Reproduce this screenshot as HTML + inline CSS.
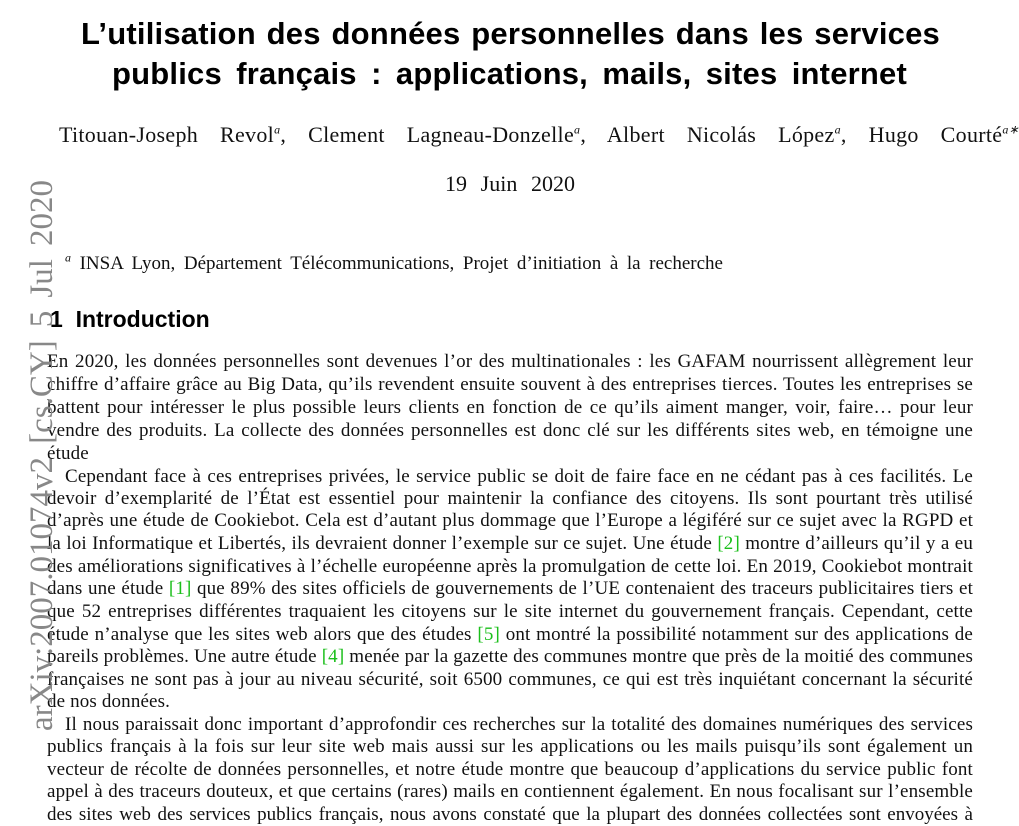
<!DOCTYPE html>
<html><head><meta charset="utf-8"><style>
body{margin:0;width:1019px;height:811px;overflow:hidden;background:#fff;position:relative;font-family:"Liberation Serif",serif;color:#111}
.l{position:absolute;white-space:nowrap;text-align:justify;text-align-last:justify;overflow:visible}
.t{font-family:"Liberation Sans",sans-serif;font-weight:bold;font-size:31px;letter-spacing:0.2px;line-height:36px;color:#000}
.b{font-size:19px;letter-spacing:0.15px;line-height:22px;left:47px;width:926px}
.n{text-align-last:left}
.g{color:#1bbf1b}
sup{font-size:12px;font-style:italic;line-height:0}
#side{position:absolute;left:20px;top:731px;transform-origin:0 0;transform:rotate(-90deg);font-size:33px;color:#888;white-space:nowrap;width:551px;text-align:justify;text-align-last:justify;line-height:44px}
</style></head><body>
<div class="l t" style="left:81px;top:16px;width:859px">L’utilisation des données personnelles dans les services</div>
<div class="l t" style="left:112px;top:56px;width:795px">publics français : applications, mails, sites internet</div>
<div class="l" style="left:59px;top:122px;width:960px;font-size:22px;letter-spacing:0.3px;line-height:26px">Titouan-Joseph Revol<sup>a</sup>, Clement Lagneau-Donzelle<sup>a</sup>, Albert Nicolás López<sup>a</sup>, Hugo Courté<sup>a∗</sup></div>
<div class="l" style="left:445px;top:171px;width:130px;font-size:22px;line-height:26px">19 Juin 2020</div>
<div class="l" style="left:65px;top:253px;width:658px;font-size:19px;line-height:22px"><sup>a</sup> INSA Lyon, Département Télécommunications, Projet d’initiation à la recherche</div>
<div class="l" style="left:50px;top:305px;width:158px;font-family:'Liberation Sans',sans-serif;font-weight:bold;font-size:23px;line-height:28px;color:#000">1&nbsp; Introduction</div>

<div class="l b" style="top:351px">En 2020, les données personnelles sont devenues l’or des multinationales : les GAFAM nourrissent allègrement leur</div>
<div class="l b" style="top:374px">chiffre d’affaire grâce au Big Data, qu’ils revendent ensuite souvent à des entreprises tierces. Toutes les entreprises se</div>
<div class="l b" style="top:397px">battent pour intéresser le plus possible leurs clients en fonction de ce qu’ils aiment manger, voir, faire… pour leur</div>
<div class="l b" style="top:420px">vendre des produits. La collecte des données personnelles est donc clé sur les différents sites web, en témoigne une</div>
<div class="l b n" style="top:443px">étude</div>
<div class="l b" style="top:466px;left:65px;width:908px">Cependant face à ces entreprises privées, le service public se doit de faire face en ne cédant pas à ces facilités. Le</div>
<div class="l b" style="top:488px">devoir d’exemplarité de l’État est essentiel pour maintenir la confiance des citoyens. Ils sont pourtant très utilisé</div>
<div class="l b" style="top:510px">d’après une étude de Cookiebot. Cela est d’autant plus dommage que l’Europe a légiféré sur ce sujet avec la RGPD et</div>
<div class="l b" style="top:533px">la loi Informatique et Libertés, ils devraient donner l’exemple sur ce sujet. Une étude <span class="g">[2]</span> montre d’ailleurs qu’il y a eu</div>
<div class="l b" style="top:556px">des améliorations significatives à l’échelle européenne après la promulgation de cette loi. En 2019, Cookiebot montrait</div>
<div class="l b" style="top:578px">dans une étude <span class="g">[1]</span> que 89% des sites officiels de gouvernements de l’UE contenaient des traceurs publicitaires tiers et</div>
<div class="l b" style="top:601px">que 52 entreprises différentes traquaient les citoyens sur le site internet du gouvernement français. Cependant, cette</div>
<div class="l b" style="top:624px">étude n’analyse que les sites web alors que des études <span class="g">[5]</span> ont montré la possibilité notamment sur des applications de</div>
<div class="l b" style="top:646px">pareils problèmes. Une autre étude <span class="g">[4]</span> menée par la gazette des communes montre que près de la moitié des communes</div>
<div class="l b" style="top:669px">françaises ne sont pas à jour au niveau sécurité, soit 6500 communes, ce qui est très inquiétant concernant la sécurité</div>
<div class="l b n" style="top:691px">de nos données.</div>
<div class="l b" style="top:714px;left:65px;width:908px">Il nous paraissait donc important d’approfondir ces recherches sur la totalité des domaines numériques des services</div>
<div class="l b" style="top:736px">publics français à la fois sur leur site web mais aussi sur les applications ou les mails puisqu’ils sont également un</div>
<div class="l b" style="top:759px">vecteur de récolte de données personnelles, et notre étude montre que beaucoup d’applications du service public font</div>
<div class="l b" style="top:781px">appel à des traceurs douteux, et que certains (rares) mails en contiennent également. En nous focalisant sur l’ensemble</div>
<div class="l b" style="top:804px;letter-spacing:0">des sites web des services publics français, nous avons constaté que la plupart des données collectées sont envoyées à</div>

<div id="side">arXiv:2007.01074v2 [cs.CY] 5 Jul 2020</div>
</body></html>
